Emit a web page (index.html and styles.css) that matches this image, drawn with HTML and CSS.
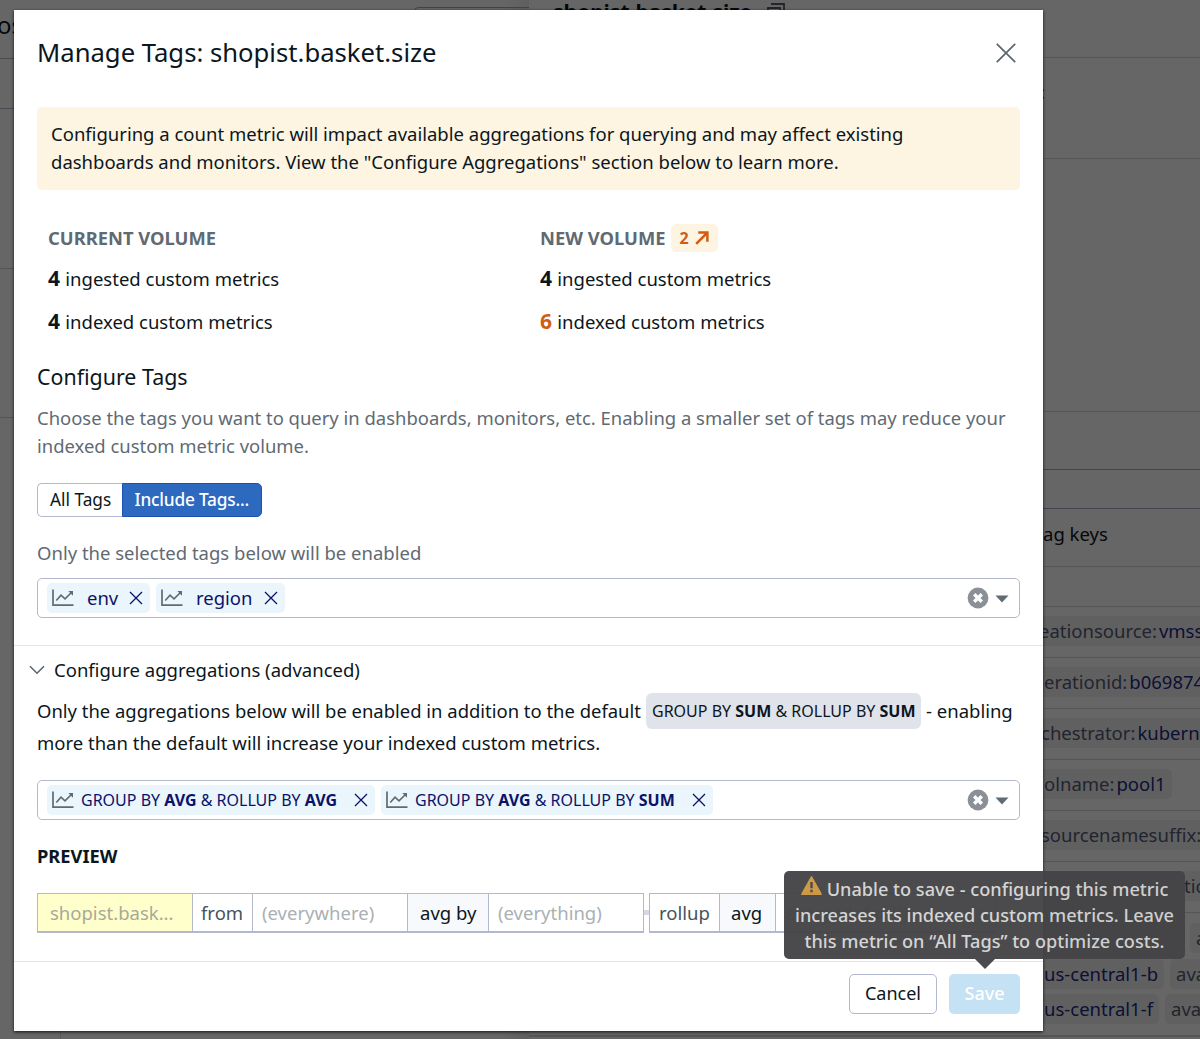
FILE: index.html
```html
<!DOCTYPE html>
<html lang="en">
<head>
<meta charset="utf-8">
<title>Manage Tags</title>
<link rel="stylesheet" href="styles.css">
</head>
<body>
<svg width="0" height="0" class="defs">
  <symbol id="chart" viewBox="0 0 22 18"><path d="M1 .5V16.2H21.5" fill="none" stroke="currentColor" stroke-width="1.7"/><path d="M4.3 11.5L9 6.2L13 9.8L19.7 3.2" fill="none" stroke="currentColor" stroke-width="1.6"/><path d="M16.3 2H21V6.7Z" fill="currentColor"/></symbol>
  <symbol id="cross" viewBox="0 0 14 14"><path d="M1 1L13 13M13 1L1 13" fill="none" stroke="currentColor" stroke-width="1.3"/></symbol>
  <symbol id="clear" viewBox="0 0 22 22"><circle cx="11" cy="11" r="10.4" fill="#8a9096"/><path d="M7.2 7.2L14.8 14.8M14.8 7.2L7.2 14.8" stroke="#fff" stroke-width="3.4"/></symbol>
  <symbol id="caret" viewBox="0 0 14 8"><path d="M.5 .5H13.5L7 7.5Z" fill="#5f6b75"/></symbol>
</svg>
<div class="page">
  <div class="page-left">
    <div class="row l1"><span class="page-title">os</span><span class="search-box"></span></div>
    <div class="row l2"></div>
    <div class="row l3"></div>
    <div class="row l4"></div>
    <div class="facet"></div>
  </div>
  <div class="page-right">
    <div class="row r1"><b>shopist.basket.size</b><svg class="copy" width="18" height="18" viewBox="0 0 18 18"><path d="M4 1H17V14M1 5H13V17H1Z" fill="none" stroke="#55606c" stroke-width="1.8"/></svg></div>
    <div class="row r2"><span>:</span></div>
    <div class="row r3"></div>
    <div class="row r4"></div>
    <div class="row r5"></div>
    <div class="row r6"><span>ag keys</span></div>
    <div class="row r7"></div>
    <div class="row tagrow"><span class="tag t1">eationsource:<i>vmssclient</i></span></div>
    <div class="row tagrow"><span class="tag t2">erationid:<i>b069874f</i></span></div>
    <div class="row tagrow"><span class="tag t3">chestrator:<i>kubernetes</i></span></div>
    <div class="row tagrow"><span class="tag t4">olname:<i>pool1</i></span></div>
    <div class="row tagrow"><span class="tag t5">sourcenamesuffix:<i>0</i></span></div>
    <div class="row tagrow"><span class="tag t6">tic</span></div>
    <div class="row zones">
      <div class="zone z1"><span class="tag"></span><span class="tag">availability</span></div>
      <div class="zone z2"><span class="tag"><i>us-central1-b</i></span><span class="tag">availability</span></div>
      <div class="zone z3"><span class="tag"><i>us-central1-f</i></span><span class="tag">availability</span></div>
    </div>
    <div class="row"></div>
  </div>
</div>
<div class="overlay">
  <div class="modal">
    <header class="head"><h1>Manage Tags: shopist.basket.size</h1><svg width="20" height="20" viewBox="0 0 20 20"><path d="M.8 .8L19.2 19.2M19.2 .8L.8 19.2" stroke="#5a666d" stroke-width="1.7"/></svg></header>
    <div class="alert">Configuring a count metric will impact available aggregations for querying and may affect existing<br>dashboards and monitors. View the "Configure Aggregations" section below to learn more.</div>
    <div class="volumes">
      <div>
        <h3>CURRENT VOLUME</h3>
        <p><b>4</b> ingested custom metrics</p>
        <p><b>4</b> indexed custom metrics</p>
      </div>
      <div>
        <h3>NEW VOLUME <span class="delta">2 <svg width="14" height="14" viewBox="0 0 14 14"><path d="M1.2 12.8L12 2M3.3 1.6H12.4V10.7" fill="none" stroke="currentColor" stroke-width="2.5"/></svg></span></h3>
        <p><b>4</b> ingested custom metrics</p>
        <p><b class="up">6</b> indexed custom metrics</p>
      </div>
    </div>
    <h2>Configure Tags</h2>
    <p class="muted desc">Choose the tags you want to query in dashboards, monitors, etc. Enabling a smaller set of tags may reduce your<br>indexed custom metric volume.</p>
    <div class="toggle"><span class="all">All Tags</span><span class="on">Include Tags...</span></div>
    <p class="muted only">Only the selected tags below will be enabled</p>
    <div class="select">
      <span class="chip env"><svg class="ch"><use href="#chart"/></svg><span class="ct">env</span><svg class="cx"><use href="#cross"/></svg></span>
      <span class="chip region"><svg class="ch"><use href="#chart"/></svg><span class="ct">region</span><svg class="cx"><use href="#cross"/></svg></span>
      <svg class="clear"><use href="#clear"/></svg><svg class="caret"><use href="#caret"/></svg>
    </div>
    <section class="advanced">
      <div class="fold"><svg width="16" height="10" viewBox="0 0 16 10"><path d="M1 1.2L8 8.2L15 1.2" fill="none" stroke="#5a666d" stroke-width="1.6"/></svg><span>Configure aggregations (advanced)</span></div>
      <p class="agg"><span class="a1">Only the aggregations below will be enabled in addition to the default</span><span class="pill">GROUP BY <b>SUM</b> &amp; ROLLUP BY <b>SUM</b></span><span>- enabling</span></p>
      <p class="agg2">more than the default will increase your indexed custom metrics.</p>
      <div class="select">
        <span class="chip g1"><svg class="ch"><use href="#chart"/></svg><span class="gt">GROUP BY <b>AVG</b> &amp; ROLLUP BY <b>AVG</b></span><svg class="cx"><use href="#cross"/></svg></span>
        <span class="chip g2"><svg class="ch"><use href="#chart"/></svg><span class="gt">GROUP BY <b>AVG</b> &amp; ROLLUP BY <b>SUM</b></span><svg class="cx"><use href="#cross"/></svg></span>
        <svg class="clear"><use href="#clear"/></svg><svg class="caret"><use href="#caret"/></svg>
      </div>
      <h4>PREVIEW</h4>
      <div class="query">
        <span class="q metric">shopist.bask...</span><span class="q from">from</span><span class="q where">(everywhere)</span><span class="q avgby">avg by</span><span class="q every">(everything)</span><span class="joint"></span><span class="q rollup">rollup</span><span class="q avg">avg</span><span class="q period"><span>every</span><span>(default)</span><span class="unit">s</span></span>
      </div>
    </section>
    <footer>
      <button class="cancel">Cancel</button>
      <div class="save-wrap">
        <button class="save">Save</button>
        <div class="tooltip"><div><svg class="warn" width="21" height="19" viewBox="0 0 21 19"><path d="M10.5 .8L20.2 18.2H.8Z" fill="#ce9640" stroke="#ce9640" stroke-width="1.4" stroke-linejoin="round"/><path d="M10.5 6V12.3M10.5 13.7V16.2" stroke="#444446" stroke-width="2.4"/></svg><span class="w1">Unable to save - configuring this metric</span></div><div><span class="w2">increases its indexed custom metrics. Leave</span></div><div><span class="w3">this metric on “All Tags” to optimize costs.</span></div></div>
      </div>
    </footer>
  </div>
</div>
</body>
</html>
```
FILE: styles.css
```css
* { box-sizing: border-box; }
body { margin: 0; width: 1200px; height: 1039px; overflow: hidden; position: relative; font: 18.5px/28px "Noto Sans", sans-serif; color: #0b1620; background: #fff; }
h1, h2, h3, h4, p { margin: 0; font-weight: 400; }
svg { display: block; flex: none; }
.defs { position: absolute; }

/* page behind the dialog */
.page { display: flex; height: 1039px; }
.page-left { width: 529px; display: flex; flex-direction: column; background: linear-gradient(90deg, transparent 505px, #ededed 528px); }
.page-right { width: 671px; display: flex; flex-direction: column; }
.row { border-bottom: 1px solid #d4d4de; flex: none; overflow: hidden; white-space: nowrap; }
.l1 { height: 59px; display: flex; justify-content: space-between; border-color: #b9b9cc; }
.page-title { font-size: 24px; line-height: 50px; margin-left: -3px; }
.search-box { width: 115px; height: 40px; margin-top: 7px; border: 1px solid #a9a9c0; border-right: 0; border-radius: 5px 0 0 5px; }
.l2 { height: 50px; border-color: #b9b9cc; }
.l3 { height: 160px; }
.l4 { height: 149px; }
.facet { flex: 1; margin-left: 60px; border-left: 1px solid #e0e0e0; }
.r1 { height: 58px; padding-left: 24px; display: flex; gap: 17px; font-size: 21px; }
.copy { margin: 3px 0 0 -2px; }
.r1 b { margin-top: -2px; }
.r2 { height: 101px; padding: 20px 0 0 511px; }
.r3 { height: 253px; }
.r4 { height: 58px; border-color: #a9a9c0; }
.r5 { height: 39px; border-color: #a9a9c0; }
.r6 { height: 58px; padding: 11px 0 0 514px; }
.r7 { height: 40px; }
.tagrow { height: 51px; padding: 9px 0 0 507px; }
.tag { display: inline-block; height: 30px; line-height: 30px; padding: 0 6px; border-radius: 5px; background: #f1f1f3; color: #555b75; }
.tag i { font-style: normal; color: #1c2a86; margin-left: 2px; }
.t1 { margin-left: -3px; }
.t2, .t4 { margin-left: 2px; }
.t3, .t5 { margin-left: -1px; }
.t6 { margin-left: 20px; padding-left: 128px; }
.zones { height: 123px; padding-top: 10px; }
.zone { display: flex; gap: 6px; height: 35.5px; }
.z1 { padding-left: 507px; }
.z1 .tag:first-child { width: 148px; }
.z1 .tag { flex: none; }
.z2 { padding-left: 508px; }
.z3 { padding-left: 508px; }
.z2 .tag:first-child i, .z3 .tag:first-child i { margin-left: 1px; }
.overlay { position: absolute; inset: 0; padding: 10px 0 0 14px; background: rgba(0,0,0,.6); }

/* dialog */
.modal { width: 1029px; height: 1021px; padding: 0 23px; background: #fff; box-shadow: 0 1px 3px rgba(0,0,0,.8); display: flex; flex-direction: column; }
.head { height: 97px; display: flex; justify-content: space-between; padding: 33px 4px 0 0; }
.head h1 { font-size: 25.65px; line-height: 20px; white-space: nowrap; }
.alert { height: 83px; padding: 13px 14px; border-radius: 5px; background: #fdf4e2; white-space: nowrap; }
.volumes { height: 163px; padding: 34px 0 0 11px; display: grid; grid-template-columns: 492px 1fr; align-content: start; }
.volumes h3 { height: 33px; display: flex; line-height: 28px; font-weight: 700; font-size: 18.35px; color: #5f6a73; }
.volumes p { height: 43px; line-height: 43px; }
.volumes b { font-size: 21px; line-height: 20px; margin-right: .5px; }
.up { color: #d25c14; }
.delta { margin-left: 6px; width: 47px; height: 28px; padding-left: 8px; display: flex; align-items: center; gap: 6px; border-radius: 5px; background: #fdf4e2; color: #d25c14; font-size: 16px; }
h2 { font-size: 21.4px; height: 48px; line-height: 48px; }
.muted { color: #5f6a73; }
.desc { height: 82px; padding-top: 3px; font-size: 18.45px; white-space: nowrap; }
.toggle { display: flex; height: 34px; font-size: 17.3px; line-height: 31px; }
.all { width: 85px; padding-left: 12px; border: 1px solid #b4b8ce; border-right: 0; border-radius: 5px 0 0 5px; }
.on { width: 140px; padding-left: 11.5px; border: 1px solid #1c50b4; border-radius: 0 5px 5px 0; background: #2c69bf; color: #fff; font-weight: 500; letter-spacing: -.2px; }
.only { height: 62px; line-height: 28px; padding-top: 22px; }
.select { height: 40px; flex: none; display: flex; align-items: flex-start; gap: 6px; padding: 4px 10px 0 9px; border: 1px solid #b4b8ce; border-radius: 5px; }
.chip { height: 30px; display: flex; align-items: center; padding: 0 7px 0 5px; border-radius: 5px; background: #ebf5fc; color: #0b1369; white-space: nowrap; line-height: 27px; }
.ch { width: 22px; height: 18px; color: #5f6b70; }
.cx { width: 14px; height: 14px; margin-left: auto; }
.env { width: 103px; }
.region { width: 129px; }
.ct { margin: -2px 0 0 13px; }
.gt { margin-left: 7px; font-size: 16px; }
.g1 { width: 328px; }
.g2 { width: 332px; }
.clear { width: 22px; height: 22px; margin: 4px 0 0 auto; }
.caret { width: 14px; height: 8px; margin-top: 12px; }
.advanced { margin: 27px -23px 0; padding: 0 23px; height: 316px; border-top: 1px solid #e3e3ee; }
.fold { display: flex; align-items: center; gap: 9px; height: 48px; margin-left: -8px; }
.agg { display: flex; height: 36px; line-height: 35px; margin-top: -1px; white-space: nowrap; }
.a1 { width: 609px; font-size: 18.47px; }
.pill { width: 275px; margin-right: 5px; padding-left: 6px; border-radius: 6px; background: #e1e3eb; font-size: 16px; line-height: 37px; }
.agg2 { height: 51px; line-height: 28px; }
h4 { height: 73px; line-height: 72px; font-size: 18.3px; font-weight: 700; }
.query { display: flex; height: 40px; line-height: 38px; white-space: nowrap; }
.q { border: 1px solid #b4b8ce; border-bottom-width: 2px; border-right-width: 0; padding-left: 9px; flex: none; }
.metric { width: 155px; padding-left: 12px; background: #ffffcc; color: #a8a998; }
.from { width: 60px; padding-left: 8px; color: #46525c; }
.where { width: 155px; color: #abb0b3; }
.avgby { width: 81px; padding-left: 12px; background: #f8f9fc; }
.every { width: 156px; color: #abb0b3; border-right-width: 1px; }
.joint { width: 5px; height: 5px; margin-top: 17px; background: #d5d8e5; }
.rollup { width: 70px; color: #46525c; }
.avg { width: 56px; padding-left: 11px; background: #f8f9fc; }
.period { display: flex; width: 221px; border-right-width: 1px; color: #abb0b3; }
.period span + span { margin-left: 4px; }
.period .unit { margin-left: auto; padding-right: 9px; }
footer { margin: 0 -23px; height: 70px; padding: 12px 23px 0; display: flex; justify-content: flex-end; gap: 12px; border-top: 1px solid #e3e3ee; }
button { height: 40px; padding: 0 0 2px; border-radius: 5px; font: 18px/35px "Noto Sans", sans-serif; }
.cancel { width: 88px; border: 1px solid #b4b8ce; background: #fff; color: #0b1620; }
.save { width: 71px; border: 0; background: #c5e1f4; color: #fff; font-weight: 500; }
.save-wrap { position: relative; }
.tooltip { position: absolute; right: -165px; bottom: 72px; width: 401px; height: 88px; padding-top: 5px; border-radius: 5px; background: #444446; opacity: .96; color: #d4d4d4; font-size: 18.15px; font-weight: 500; line-height: 26px; white-space: nowrap; }
.tooltip div { display: flex; justify-content: center; gap: 5px; height: 26px; }
.tooltip::after { content: ""; position: absolute; left: 191px; top: 88px; border: 10px solid transparent; border-top-color: #444446; border-bottom: 0; }
```
